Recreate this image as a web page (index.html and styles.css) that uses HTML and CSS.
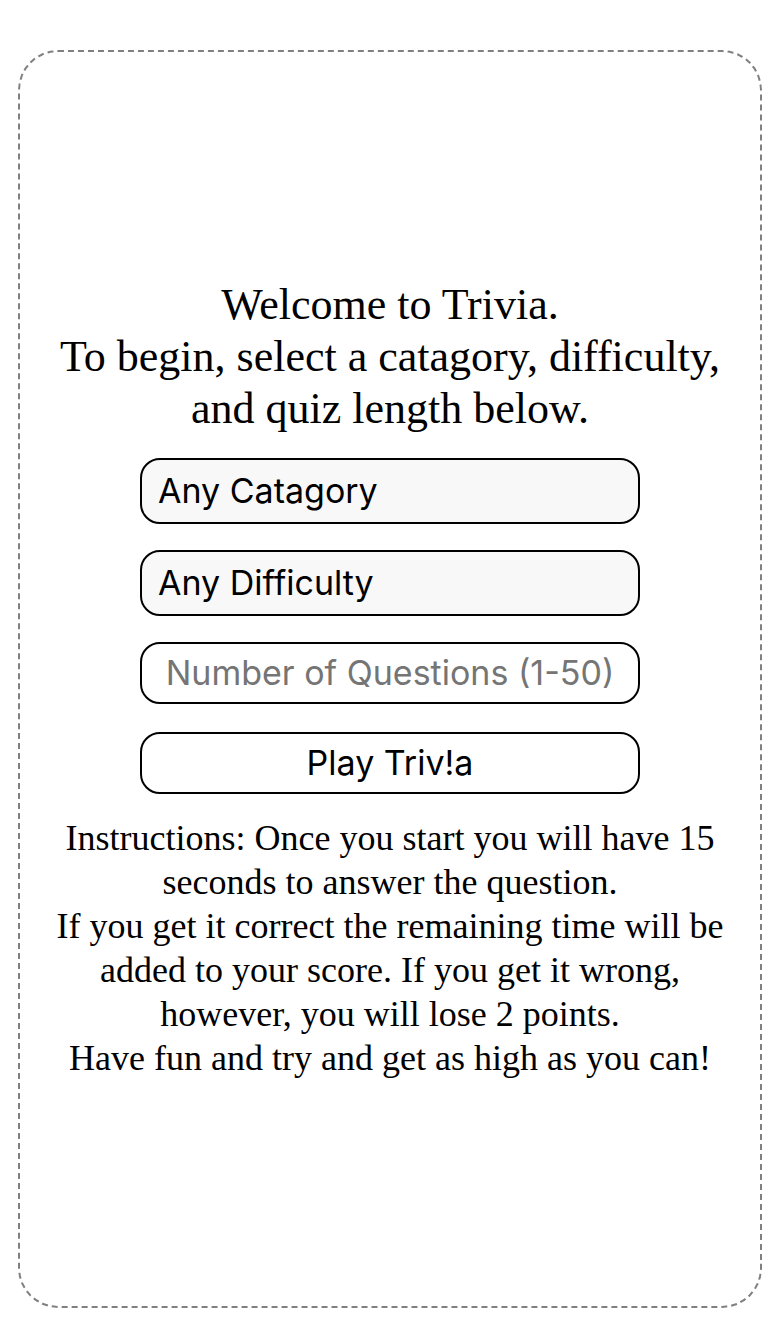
FILE: index.html
```html
<!DOCTYPE html>
<html lang="en">
<head>
<meta charset="utf-8">
<meta name="viewport" content="width=device-width, initial-scale=1">
<title>Trivia</title>
<link rel="stylesheet" href="styles.css">
</head>
<body>
<main class="card">
  <p class="welcome">Welcome to Trivia.<br>To begin, select a catagory, difficulty, and quiz length below.</p>
  <form class="options">
    <select class="field select" aria-label="Category"><option>Any Catagory</option></select>
    <select class="field select" aria-label="Difficulty"><option>Any Difficulty</option></select>
    <input class="field number" type="text" inputmode="numeric" aria-label="Number of questions" placeholder="Number of Questions (1-50)">
    <button class="field play" type="button">Play Triv!a</button>
  </form>
  <p class="instructions">Instructions: Once you start you will have 15 seconds to answer the question.<br>If you get it correct the remaining time will be added to your score. If you get it wrong, however, you will lose 2 points.<br>Have fun and try and get as high as you can!</p>
</main>
</body>
</html>
```
FILE: styles.css
```css
* {
  box-sizing: border-box;
}

body {
  margin: 0;
  min-height: 100vh;
  padding: 50px 20px 32px 18px;
  display: flex;
  background: #fff;
  color: #000;
  font-family: "Liberation Serif", "Times New Roman", serif;
}

.card {
  flex: 1;
  min-width: 0;
  display: flex;
  flex-direction: column;
  align-items: center;
  justify-content: center;
  padding: 0 32px;
  border: 2px dashed #808080;
  border-radius: 40px;
  text-align: center;
}

.welcome {
  margin: 0 0 23px;
  font-size: 44px;
  line-height: 52px;
}

.options {
  display: flex;
  flex-direction: column;
  gap: 26px;
  width: 100%;
  max-width: 500px;
}

.field {
  width: 100%;
  height: 62px;
  margin: 0;
  border: 2px solid #000;
  border-radius: 20px;
  padding: 0 16px;
  background: #fff;
  color: #000;
  font-family: Inter, sans-serif;
  font-size: 34px;
  text-align: center;
}

.select {
  appearance: none;
  height: 66px;
  background: #f8f8f8;
  text-align: left;
}

.play {
  margin-top: 2px;
}

.number::placeholder {
  color: #757575;
  opacity: 1;
}

.instructions {
  margin: 22px 0 0;
  font-size: 36px;
  line-height: 44px;
}
```
